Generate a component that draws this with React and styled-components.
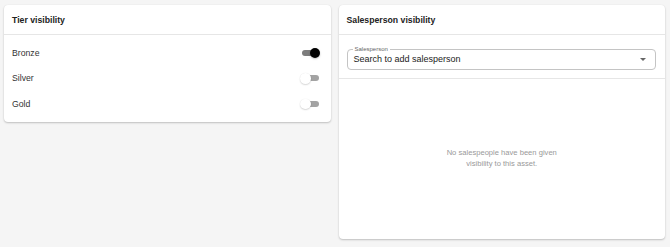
import React from "react";
import styled, { createGlobalStyle } from "styled-components";

const Global = createGlobalStyle`
  html, body { margin: 0; padding: 0; background: #f5f5f5; }
  body { font-family: "Liberation Sans", Arial, Helvetica, sans-serif; color: #333; }
  * { box-sizing: border-box; }
`;

const Page = styled.div`
  display: grid;
  grid-template-columns: 1fr 1fr;
  gap: 8px;
  align-items: start;
  padding: 5px 5px 8px 4px;
  height: 247px;
`;

const Card = styled.section`
  background: #fff;
  border-radius: 4px;
  box-shadow: 0 1px 2px rgba(0,0,0,0.22), 0 0 1px rgba(0,0,0,0.08);
  display: flex;
  flex-direction: column;
  height: ${(p) => (p.$tall ? "234px" : "auto")};
`;

const CardHeader = styled.header`
  height: 30px;
  display: flex;
  align-items: center;
  padding: 0 8px;
  border-bottom: 1px solid #e6e6e6;
  font-size: 8.7px;
  font-weight: 700;
  color: #222;
`;

const RowList = styled.div`
  display: flex;
  flex-direction: column;
  padding: 5px 0 5px;
`;

const Row = styled.div`
  height: 25.5px;
  display: flex;
  align-items: center;
  justify-content: space-between;
  padding: 0 12px 0 8px;
  font-size: 8.7px;
  color: #333;
`;

const Switch = styled.span`
  position: relative;
  width: 17px;
  height: 6px;
  border-radius: 3px;
  background: ${(p) => (p.$on ? "#7d7d7d" : "#a3a3a3")};
  flex: none;
  &::after {
    content: "";
    position: absolute;
    top: 50%;
    left: ${(p) => (p.$on ? "8px" : "-1.5px")};
    width: 10.5px;
    height: 10.5px;
    margin-top: -5.25px;
    border-radius: 50%;
    background: ${(p) => (p.$on ? "#000" : "#fff")};
    box-shadow: ${(p) => (p.$on ? "0 1px 2px rgba(0,0,0,0.25)" : "0 1px 1.5px rgba(0,0,0,0.15), 0 0 1px rgba(0,0,0,0.1)")};
  }
`;

const SelectSection = styled.div`
  padding: 14px 9px 8px 8px;
  border-bottom: 1px solid #e6e6e6;
`;

const SelectBox = styled.div`
  position: relative;
  height: 20.5px;
  border: 1px solid #c4c4c4;
  border-radius: 4px;
  display: flex;
  align-items: center;
  justify-content: space-between;
  padding: 0 9px 0 6px;
  font-size: 9px;
  color: #222;
`;

const FloatLabel = styled.span`
  position: absolute;
  left: 5px;
  top: -4px;
  padding: 0 2px;
  background: #fff;
  font-size: 6px;
  line-height: 6px;
  color: #666;
`;

const Arrow = styled.span`
  width: 0;
  height: 0;
  border-left: 3px solid transparent;
  border-right: 3px solid transparent;
  border-top: 3px solid #666;
`;

const Empty = styled.div`
  flex: 1;
  display: flex;
  align-items: center;
  justify-content: center;
  padding-bottom: 1px;
`;

const EmptyText = styled.p`
  margin: 0;
  max-width: 124px;
  text-align: center;
  font-size: 7.6px;
  line-height: 11px;
  color: #999;
`;

const tiers = [
  { name: "Bronze", on: true },
  { name: "Silver", on: false },
  { name: "Gold", on: false },
];

export default function App() {
  return (
    <>
      <Global />
      <Page>
        <Card>
          <CardHeader>Tier visibility</CardHeader>
          <RowList>
            {tiers.map((t) => (
              <Row key={t.name}>
                <span>{t.name}</span>
                <Switch $on={t.on} />
              </Row>
            ))}
          </RowList>
        </Card>
        <Card $tall>
          <CardHeader>Salesperson visibility</CardHeader>
          <SelectSection>
            <SelectBox>
              <FloatLabel>Salesperson</FloatLabel>
              <span>Search to add salesperson</span>
              <Arrow />
            </SelectBox>
          </SelectSection>
          <Empty>
            <EmptyText>No salespeople have been given visibility to this asset.</EmptyText>
          </Empty>
        </Card>
      </Page>
    </>
  );
}
